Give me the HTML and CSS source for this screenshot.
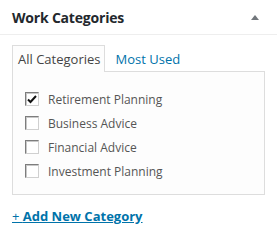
FILE: index.html
```html
<!DOCTYPE html>
<html lang="en">
<head>
    <meta charset="UTF-8">
    <title>Work Categories</title>
    <link rel="stylesheet" href="styles.css">
</head>
<body>
    <div class="postbox">
        <div class="postbox-header">
            <h2>Work Categories</h2>
            <button class="toggle" title="Toggle panel"><span class="toggle-arrow"></span></button>
        </div>
        <div class="inside">
            <ul class="tabs">
                <li class="tab active">All Categories</li>
                <li class="tab"><a href="#">Most Used</a></li>
            </ul>
            <div class="tabs-panel">
                <ul class="checklist">
                    <li><label><span class="checkbox checked"><svg width="10" height="9" viewBox="0 0 10 9"><polyline points="1,4.5 3.5,7 9,1" fill="none" stroke="#111" stroke-width="2"/></svg></span>Retirement Planning</label></li>
                    <li><label><span class="checkbox"></span>Business Advice</label></li>
                    <li><label><span class="checkbox"></span>Financial Advice</label></li>
                    <li><label><span class="checkbox"></span>Investment Planning</label></li>
                </ul>
            </div>
            <a class="add-new" href="#">+ <strong>Add New Category</strong></a>
        </div>
    </div>
</body>
</html>
```

FILE: styles.css
```css
* {
    margin: 0;
    padding: 0;
    box-sizing: border-box;
}

body {
    background-color: #fff;
    color: #444;
    font-family: "Open Sans", "Noto Sans", sans-serif;
    font-size: 13px;
}

.postbox {
    width: 277px;
}

.postbox-header {
    display: flex;
    justify-content: space-between;
    align-items: center;
    height: 35px;
    border-bottom: 1px solid #eee;
    padding: 0 12px;
}

.postbox-header h2 {
    font-size: 14px;
    font-weight: 700;
    color: #23282d;
    letter-spacing: -0.2px;
}

.toggle {
    background: none;
    border: none;
    width: 16px;
    height: 16px;
    display: flex;
    align-items: center;
    justify-content: center;
    margin-right: 2px;
}

.toggle-arrow {
    width: 0;
    height: 0;
    border-left: 4px solid transparent;
    border-right: 4px solid transparent;
    border-bottom: 5px solid #72777c;
}

.inside {
    padding: 10px 12px 12px;
}

.tabs {
    list-style: none;
    display: flex;
    align-items: flex-end;
    position: relative;
    margin-bottom: -1px;
    z-index: 1;
}

.tab {
    height: 27px;
    padding: 4px 4px 0 5px;
    border: 1px solid transparent;
    border-bottom: none;
    color: #444;
}

.tab.active {
    border-color: #ddd;
    background-color: #fdfdfd;
}

.tab a {
    display: block;
    color: #0073aa;
    text-decoration: none;
    padding-left: 4px;
}

.tabs-panel {
    border: 1px solid #ddd;
    background-color: #fdfdfd;
    padding: 20px 12px 16px;
}

.checklist {
    list-style: none;
    display: flex;
    flex-direction: column;
    gap: 10px;
}

.checklist label {
    display: flex;
    align-items: center;
    height: 14px;
    color: #555;
    font-size: 12px;
}

.checkbox {
    width: 14px;
    height: 14px;
    border: 1px solid;
    border-color: #7d7d7d #d0d0d0 #d0d0d0 #7d7d7d;
    background-color: #fff;
    box-shadow: inset 1px 1px 0 #c8c8c8;
    margin-right: 9px;
    display: flex;
    align-items: center;
    justify-content: center;
}

.add-new {
    display: inline-block;
    margin-top: 12px;
    color: #0073aa;
    text-decoration: underline;
    font-size: 13px;
}

.add-new strong {
    font-weight: 700;
}
```
